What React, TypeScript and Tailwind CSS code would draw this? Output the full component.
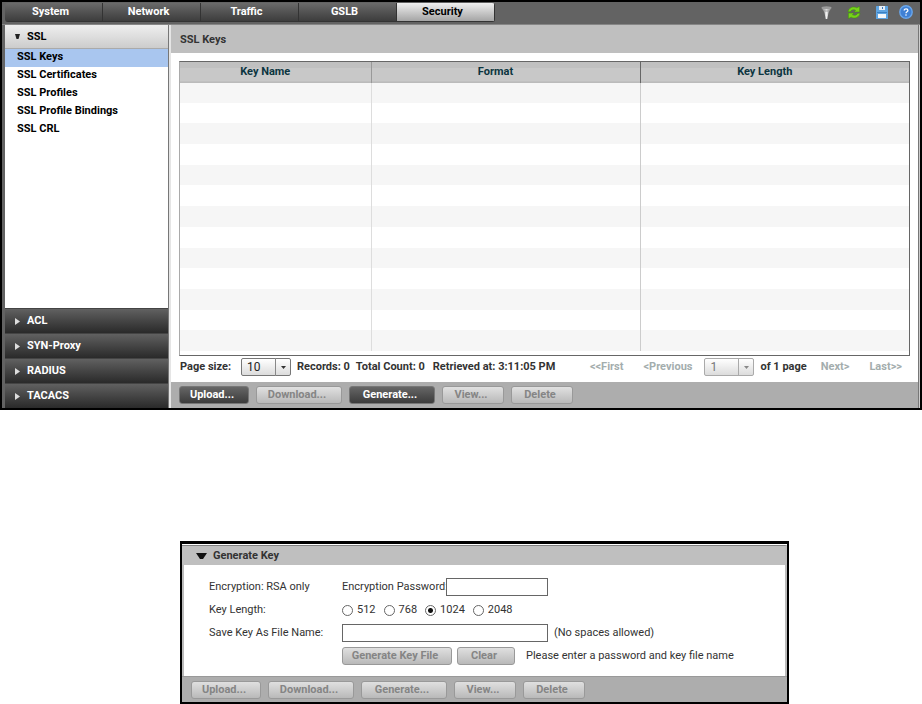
import React, { useState } from 'react';
import { clsx } from 'clsx';

const tabs = ['System', 'Network', 'Traffic', 'GSLB', 'Security'];
const sslItems = ['SSL Keys', 'SSL Certificates', 'SSL Profiles', 'SSL Profile Bindings', 'SSL CRL'];
const sections = ['ACL', 'SYN-Proxy', 'RADIUS', 'TACACS'];
const keyLengths = ['512', '768', '1024', '2048'];
const emptyRows = Array.from({ length: 13 }, (_, i) => i);

const actions = [
  { label: 'Upload...', width: 'w-[70px]', enabled: true },
  { label: 'Download...', width: 'w-[86px]', enabled: false },
  { label: 'Generate...', width: 'w-[86px]', enabled: true },
  { label: 'View...', width: 'w-[62px]', enabled: false },
  { label: 'Delete', width: 'w-[62px]', enabled: false },
];

const FilterIcon = () => (
  <svg width="11" height="13" viewBox="0 0 11 13">
    <defs>
      <linearGradient id="funnel" x1="0" x2="1">
        <stop offset="0" stopColor="#7c7c7c" />
        <stop offset="0.5" stopColor="#f0f0f0" />
        <stop offset="1" stopColor="#757575" />
      </linearGradient>
    </defs>
    <path d="M0.5 2 L3.5 6.5 L4.7 13 H6.3 L7.5 6.5 L10.5 2 Z" fill="url(#funnel)" />
    <ellipse cx="5.5" cy="1.8" rx="5" ry="1.5" fill="#9c9c9c" />
    <path d="M2 5 H9" stroke="#6d6d6d" strokeWidth="0.6" />
  </svg>
);

const RefreshIcon = () => (
  <svg width="14" height="13" viewBox="0 0 14 13">
    <path d="M1 5.8 C1.6 2 6 -0.4 9.8 1.8 L12.6 0.4 V5.9 H7 L8.6 4.2 C6.4 3.2 4.2 3.8 3.4 5.8 Z" fill="#76d31a" stroke="#3f9208" strokeWidth="0.5" />
    <path d="M13 7.2 C12.4 11 8 13.4 4.2 11.2 L1.4 12.6 V7.1 H7 L5.4 8.8 C7.6 9.8 9.8 9.2 10.6 7.2 Z" fill="#76d31a" stroke="#3f9208" strokeWidth="0.5" />
  </svg>
);

const SaveIcon = () => (
  <svg width="12" height="13" viewBox="0 0 12 13">
    <rect width="12" height="13" rx="0.5" fill="#5fa5e2" />
    <rect x="3" width="6" height="4" fill="#e6eef7" />
    <rect x="6" y="1" width="1" height="2" fill="#3774b5" />
    <rect x="2" y="8" width="8" height="4" fill="#f4f7fa" />
    <path d="M1 6.5 H11" stroke="#3c80c2" />
  </svg>
);

const HelpIcon = () => (
  <svg width="14" height="14" viewBox="0 0 14 14">
    <circle cx="7" cy="7" r="6.2" fill="#3f80d4" stroke="#6aa6ea" strokeWidth="1.4" />
    <path d="M5.2 5.4 C5.2 3.4 8.9 3.4 8.9 5.4 C8.9 6.8 7 6.8 7 8.2" fill="none" stroke="#fff" strokeWidth="1.3" />
    <circle cx="7" cy="10" r="0.8" fill="#fff" />
  </svg>
);

const toolbar = [
  { label: 'Filter', icon: FilterIcon },
  { label: 'Refresh', icon: RefreshIcon },
  { label: 'Save', icon: SaveIcon },
  { label: 'Help', icon: HelpIcon },
];

interface ActionButtonProps {
  label: string;
  width: string;
  enabled?: boolean;
}

const ActionButton: React.FC<ActionButtonProps> = ({ label, width, enabled = false }) => (
  <button
    type="button"
    disabled={!enabled}
    className={clsx(
      'h-[18px] shrink-0 rounded-[3px] border pr-1 text-center font-bold leading-4',
      width,
      enabled
        ? 'border-[#777777] bg-linear-to-b from-[#666666] to-[#3c3c3c] text-white'
        : 'border-[#999999] bg-linear-to-b from-[#e0e0e0] to-[#b9b9b9] text-[#858585]'
    )}
  >
    {label}
  </button>
);

interface PageSelectProps {
  label: string;
  value: string;
  disabled?: boolean;
}

const PageSelect: React.FC<PageSelectProps> = ({ label, value, disabled }) => (
  <span className="relative flex shrink-0">
    <select
      aria-label={label}
      defaultValue={value}
      disabled={disabled}
      className={clsx(
        'h-[18px] w-[50px] appearance-none rounded-[2px] border bg-linear-to-b from-white to-[#dcdcdc] pl-[5px] text-xs leading-4 font-normal opacity-100',
        disabled ? 'border-[#aaaaaa] text-[#777777]' : 'border-[#777777] text-[#222222]'
      )}
    >
      <option>{value}</option>
    </select>
    <span
      className={clsx(
        'pointer-events-none absolute inset-y-0 right-0 flex w-4 items-center justify-center border-l',
        disabled ? 'border-[#aaaaaa] text-[#888888]' : 'border-[#888888] text-[#333333]'
      )}
    >
      <svg width="5" height="3" viewBox="0 0 5 3">
        <path d="M0 0 H5 L2.5 3 Z" fill="currentColor" />
      </svg>
    </span>
  </span>
);

const Sidebar = () => (
  <nav className="flex w-[164px] shrink-0 flex-col border-r border-[#777777] bg-white font-bold">
    <button
      type="button"
      className="flex h-6 items-center border-b border-[#aaaaaa] bg-linear-to-b from-[#eeeeee] via-[#dedede] to-[#cccccc] pl-2.5 text-left text-black"
    >
      <svg width="5" height="5" viewBox="0 0 5 5" className="mr-[7px]">
        <path d="M0 0 H5 L3.5 5 H1.5 Z" fill="#222" />
      </svg>
      SSL
    </button>
    <ul className="flex-1">
      {sslItems.map((item, i) => (
        <li key={item}>
          <a href="#" className={clsx('block h-[18px] pl-3 leading-4 text-black', i === 0 && 'bg-[#a9c6ef]')}>
            {item}
          </a>
        </li>
      ))}
    </ul>
    {sections.map(section => (
      <button
        key={section}
        type="button"
        className="flex h-[25px] items-center border-t border-[#444444] bg-linear-to-b from-[#616161] to-[#2a2a2a] pl-2.5 text-left text-white"
      >
        <svg width="5" height="7" viewBox="0 0 5 7" className="mr-[7px]">
          <path d="M0 0 L5 3.5 L0 7 Z" fill="#ddd" />
        </svg>
        {section}
      </button>
    ))}
  </nav>
);

const KeysTable = () => (
  <div className="mt-2 mr-2 ml-2 border border-[#666666] border-l-[#aaaaaa] pb-1">
    <table className="h-[289px] w-full table-fixed border-collapse">
      <colgroup>
        <col className="w-[191px]" />
        <col />
        <col />
      </colgroup>
      <thead>
        <tr className="h-5 border-b border-[#bbbbbb] bg-linear-to-b from-[#c0c0c0] from-30% to-[#c8c8c8] to-30% text-[#0c3540]">
          <th className="border-r border-[#999999] pr-5">Key Name</th>
          <th className="border-r border-[#666666] pr-5">Format</th>
          <th className="pr-5">Key Length</th>
        </tr>
      </thead>
      <tbody>
        {emptyRows.map(row => (
          <tr key={row} className="h-5 odd:bg-[#f6f6f6] even:bg-white">
            <td className="border-r border-[#dddddd]" />
            <td className="border-r border-[#cccccc]" />
            <td />
          </tr>
        ))}
      </tbody>
    </table>
  </div>
);

const Pager = () => (
  <div className="flex h-[26px] items-center pr-4 pb-1 pl-[9px] font-bold whitespace-nowrap text-[#333333]">
    <span className="mr-2.5">Page size:</span>
    <PageSelect label="Page size" value="10" />
    <span className="ml-1.5">Records: 0</span>
    <span className="ml-1.5">Total Count: 0</span>
    <span className="ml-2">Retrieved at: 3:11:05 PM</span>
    <div className="ml-auto flex items-center text-[#a3adad]">
      <button type="button" disabled>&lt;&lt;First</button>
      <button type="button" disabled className="ml-5">&lt;Previous</button>
      <span className="mr-1.5 ml-3">
        <PageSelect label="Page" value="1" disabled />
      </span>
      <span className="text-[#333333]">of 1 page</span>
      <button type="button" disabled className="ml-3.5">Next&gt;</button>
      <button type="button" disabled className="ml-5">Last&gt;&gt;</button>
    </div>
  </div>
);

const GenerateKeyPanel = () => {
  const [keyLength, setKeyLength] = useState('1024');

  return (
    <section className="mt-[131px] ml-[180px] w-full max-w-[609px] border-2 border-t-[3px] border-black bg-white pt-px text-[#333333]">
      <h2 className="flex h-5 items-center border-t border-r-2 border-[#808080] border-r-[#bbbbbb] bg-[#bfbfbf] pl-3.5 font-bold">
        <svg width="11" height="6" viewBox="0 0 11 6" className="mr-1.5">
          <path d="M0 0 H11 L7 6 H4 Z" fill="#111" />
        </svg>
        Generate Key
      </h2>
      <form className="flex h-[111px] flex-col gap-[5px] border-x-2 border-[#bbbbbb] pt-[13px] pl-[25px] whitespace-nowrap">
        <div className="flex h-[18px] items-center">
          <span className="w-[133px]">Encryption: RSA only</span>
          <label htmlFor="password" className="w-[104px]">Encryption Password:</label>
          <input id="password" type="password" className="h-[18px] w-[102px] border border-[#666666] bg-white px-1" />
        </div>
        <div className="flex h-[18px] items-center">
          <span className="w-[133px]">Key Length:</span>
          {keyLengths.map(length => (
            <label key={length} className="mr-2 flex items-center gap-1">
              <input
                type="radio"
                name="keyLength"
                checked={keyLength === length}
                onChange={() => setKeyLength(length)}
                className="size-[11px] appearance-none rounded-full border border-[#666666] bg-white checked:bg-[radial-gradient(#111_2px,#fff_3px)]"
              />
              {length}
            </label>
          ))}
        </div>
        <div className="flex h-[18px] items-center">
          <label htmlFor="fileName" className="w-[133px]">Save Key As File Name:</label>
          <input id="fileName" type="text" className="h-[18px] w-[206px] border border-[#666666] bg-white px-1" />
          <span className="ml-1.5">(No spaces allowed)</span>
        </div>
        <div className="flex h-[18px] items-center gap-[5px] pl-[133px]">
          <ActionButton label="Generate Key File" width="w-[110px]" />
          <ActionButton label="Clear" width="w-[58px]" />
          <span className="ml-1.5">Please enter a password and key file name</span>
        </div>
      </form>
      <div className="flex h-[26px] items-center gap-[7px] border-t border-[#999999] bg-[#adadad] pl-[9px]">
        {actions.map(action => (
          <ActionButton key={action.label} label={action.label} width={action.width} />
        ))}
      </div>
    </section>
  );
};

export default function App() {
  const [activeTab, setActiveTab] = useState('Security');

  return (
    <div className="bg-white font-[Roboto,'Liberation_Sans',sans-serif] text-[11px] leading-4">
      <div className="border-2 border-black bg-[#636363]">
        <header className="flex h-[23px] items-start border-b border-[#868686] pt-px pr-1 pl-[3px]">
          <div role="tablist" className="flex overflow-hidden rounded-[3px]">
            {tabs.map(tab => (
              <button
                key={tab}
                type="button"
                role="tab"
                aria-selected={tab === activeTab}
                onClick={() => setActiveTab(tab)}
                className={clsx(
                  'h-[19px] w-[98px] border-r border-b border-[#333333] pr-1.5 text-center font-bold leading-[18px]',
                  tab === activeTab
                    ? 'bg-linear-to-b from-[#f0f0f0] to-[#a5a5a5] text-black'
                    : 'bg-linear-to-b from-[#6a6a6a] to-[#3d3d3d] text-white'
                )}
              >
                {tab}
              </button>
            ))}
          </div>
          <div className="ml-auto flex h-[18px] items-center">
            {toolbar.map(({ label, icon: Icon }) => (
              <button
                key={label}
                type="button"
                aria-label={label}
                className="flex w-7 justify-center last:w-5"
              >
                <Icon />
              </button>
            ))}
          </div>
        </header>

        <div className="flex pl-[3px]">
          <Sidebar />
          <main className="flex min-w-0 flex-1 flex-col border-r border-l-2 border-[#777777] border-l-[#e5e5e5] bg-white">
            <h1 className="h-7 bg-[#bfbfbf] pt-[7px] pl-[9px] font-bold text-[#333333]">SSL Keys</h1>
            <KeysTable />
            <Pager />
            <div className="flex h-[26px] items-center gap-[7px] bg-[#adadad] pl-2">
              {actions.map(action => (
                <ActionButton key={action.label} {...action} />
              ))}
            </div>
          </main>
          <div className="w-px bg-[#cccccc]" />
        </div>
      </div>

      <GenerateKeyPanel />
    </div>
  );
}
